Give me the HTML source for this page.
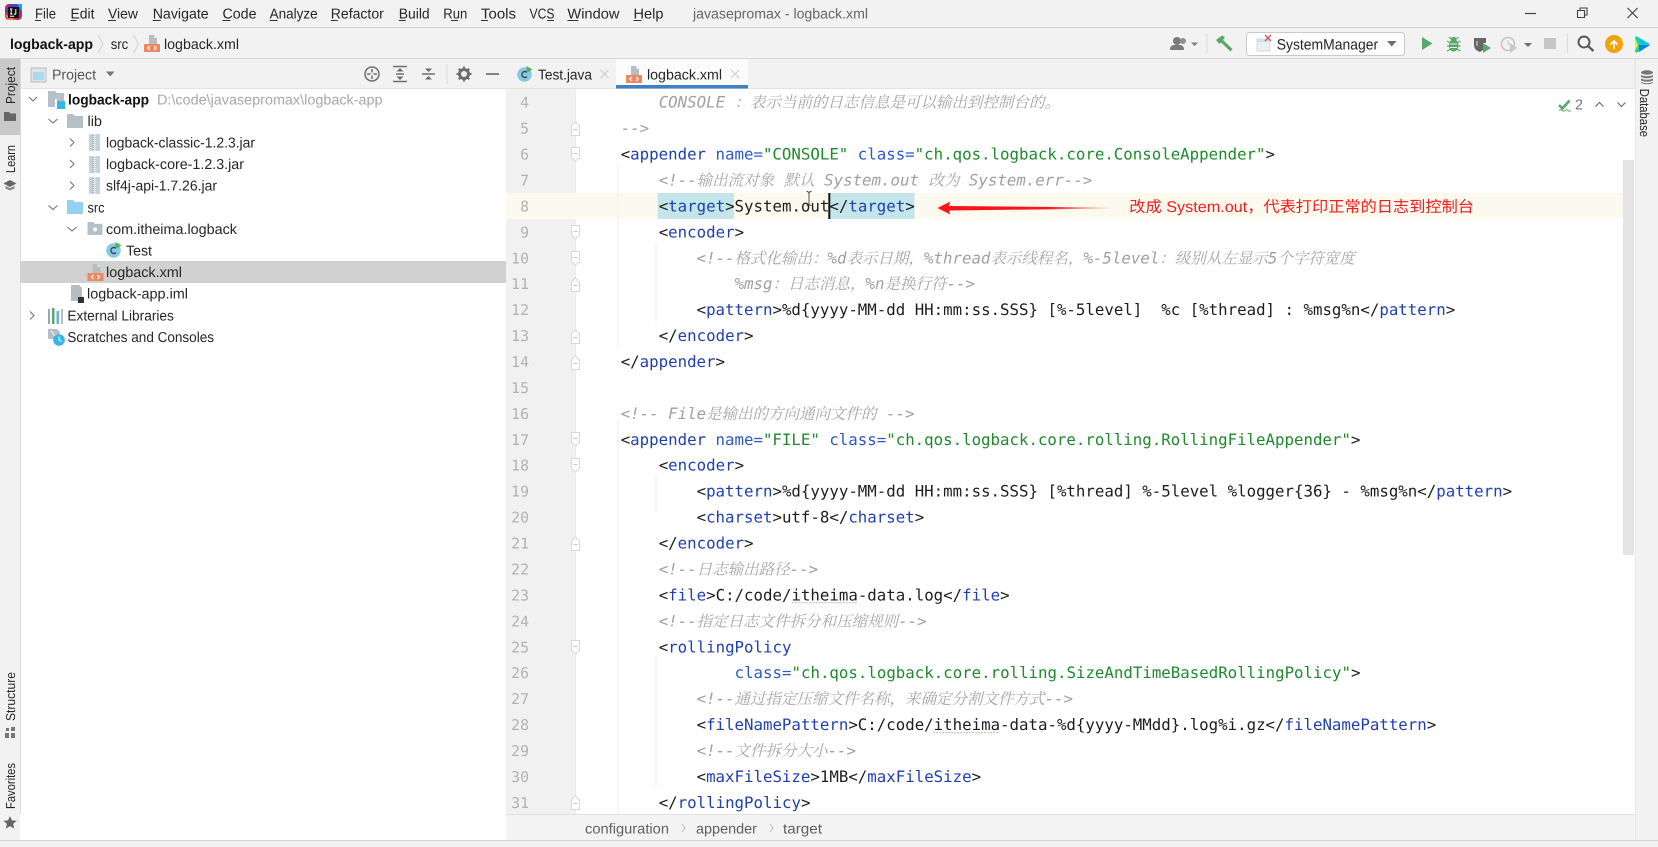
<!DOCTYPE html>
<html lang="en"><head><meta charset="utf-8"><title>logback.xml</title>
<style>
html,body{margin:0;padding:0;width:1658px;height:847px;overflow:hidden;background:#fff}
svg{display:block;text-rendering:geometricPrecision;filter:blur(.35px)}
text{white-space:pre}
.u{font-family:"Liberation Sans","Noto Sans CJK SC",sans-serif;font-size:14.4px;fill:#262626}
.b{font-weight:bold;fill:#111}
.code text{font-family:"DejaVu Sans Mono","Liberation Mono",monospace;font-size:15.76px;fill:#1d1d1d}
.k{fill:#1f3fb0}.a{fill:#2b57c9}.s{fill:#1f8a2c}
.code .m,.m{fill:#a0a0a0;font-style:italic}
.code .z{font-family:"Noto Serif CJK SC","Noto Sans CJK SC",serif;font-size:15.5px;fill:#a6a6a6;font-style:italic}
.ln text{font-family:"DejaVu Sans Mono","Liberation Mono",monospace;font-size:14.8px;fill:#b2b2b2;text-anchor:end}
</style></head><body>
<svg xmlns="http://www.w3.org/2000/svg" width="1658" height="847" viewBox="0 0 1658 847">
<defs>
<linearGradient id="ag" x1="0" x2="1" y1="0" y2="0"><stop offset="0" stop-color="#f8141a"/><stop offset=".6" stop-color="#f8141a"/><stop offset="1" stop-color="#f8141a" stop-opacity="0"/></linearGradient>
<symbol id="xml" viewBox="0 0 16 17"><path d="M5 0h5l3 3v7H5z" fill="#b9bdc0"/><path d="M10 0v3h3z" fill="#e4e6e8"/><rect y="9" width="16" height="8" fill="#ea8a62"/><path d="M6 11l-2.2 2 2.2 2M10 11l2.2 2-2.2 2" fill="none" stroke="#fff" stroke-width="1.1"/></symbol>
<symbol id="jar" viewBox="0 0 11 17"><rect width="11" height="17" fill="#c7d3da"/><rect x="4" width="3" height="17" fill="#e3eaee"/><path d="M4.2 1v15" stroke="#8fa2ad" stroke-width="1.4" stroke-dasharray="1 1"/><path d="M6.8 1v15" stroke="#a8d3e6" stroke-width="1.4" stroke-dasharray="1 1"/></symbol>
<symbol id="cls" viewBox="0 0 16 16"><circle cx="7.5" cy="8.5" r="7.3" fill="#8ac9e6"/><path d="M10 6.4A3 3 0 1 0 10 10.6" fill="none" stroke="#3b4a52" stroke-width="1.4"/><path d="M9.5 0l6 3.5-6 3.5z" fill="#4fb35c"/></symbol>
<symbol id="folder" viewBox="0 0 16 14"><path d="M0 0h6l2 2h8v12H0z"/></symbol>
<symbol id="up" viewBox="0 0 9 15"><path d="M.5 14.5V5L4.5 .8 8.5 5v9.5z" fill="#fff" stroke="#d8d8d8"/><path d="M2.5 8.5h4" stroke="#c6c6c6"/></symbol>
<symbol id="dn" viewBox="0 0 9 15"><path d="M.5 .5V10l4 4.2 4-4.2V.5z" fill="#fff" stroke="#d8d8d8"/><path d="M2.5 6.5h4" stroke="#c6c6c6"/></symbol>
</defs>

<!-- base -->
<rect width="1658" height="847" fill="#f2f2f2"/>
<rect y="27" width="1658" height="1" fill="#d4d4d4"/>
<rect y="58" width="1658" height="1" fill="#d6d6d6"/>
<rect x="20" y="89" width="486" height="725" fill="#fff"/>
<rect x="20" y="88" width="486" height="1" fill="#e2e2e2"/>
<rect x="506" y="88" width="1129" height="1" fill="#e2e2e2"/>
<rect x="20" y="59" width="1" height="781" fill="#dcdcdc"/>
<rect x="1634.5" y="59" width="1" height="781" fill="#dcdcdc"/>
<rect x="20" y="814" width="486" height="26" fill="#fff"/>
<rect y="840" width="1658" height="1" fill="#d4d4d4"/>

<!-- title bar -->
<rect x="5" y="4" width="17" height="16" rx="4" fill="#c9266c"/>
<path d="M5 12l5-8h7l5 3v6z" fill="#4a3fcf"/>
<path d="M17 4h5v8z" fill="#1aa0e8"/><path d="M5 14l3 6h8z" fill="#f0862a"/>
<rect x="8" y="7" width="11" height="11" fill="#111"/>
<path d="M10 9h2.4M11.2 9v5M10 14h2.4M15.8 9v4.5q0 .8-1 .8h-1M9.8 16.2h4.4" stroke="#fff" stroke-width="1" fill="none"/>
<g class="mn">
<text class="u" x="35" y="18.5" textLength="21" lengthAdjust="spacingAndGlyphs">File</text>
<text class="u" x="70.5" y="18.5" textLength="24" lengthAdjust="spacingAndGlyphs">Edit</text>
<text class="u" x="108" y="18.5" textLength="30" lengthAdjust="spacingAndGlyphs">View</text>
<text class="u" x="152.7" y="18.5" textLength="56" lengthAdjust="spacingAndGlyphs">Navigate</text>
<text class="u" x="222.5" y="18.5" textLength="34" lengthAdjust="spacingAndGlyphs">Code</text>
<text class="u" x="269.6" y="18.5" textLength="48" lengthAdjust="spacingAndGlyphs">Analyze</text>
<text class="u" x="330.8" y="18.5" textLength="53" lengthAdjust="spacingAndGlyphs">Refactor</text>
<text class="u" x="398.7" y="18.5" textLength="31" lengthAdjust="spacingAndGlyphs">Build</text>
<text class="u" x="443.3" y="18.5" textLength="24" lengthAdjust="spacingAndGlyphs">Run</text>
<text class="u" x="481" y="18.5" textLength="35" lengthAdjust="spacingAndGlyphs">Tools</text>
<text class="u" x="529.5" y="18.5" textLength="25" lengthAdjust="spacingAndGlyphs">VCS</text>
<text class="u" x="567.4" y="18.5" textLength="52" lengthAdjust="spacingAndGlyphs">Window</text>
<text class="u" x="633.5" y="18.5" textLength="30" lengthAdjust="spacingAndGlyphs">Help</text>
</g>
<g stroke="#333" stroke-width="1"><path d="M35 20.5h6M70.5 20.5h6M108 20.5h8M152.7 20.5h8M222.5 20.5h8M269.6 20.5h8M330.8 20.5h7M398.7 20.5h7M451 20.5h7M481 20.5h7M547 20.5h7M567.4 20.5h11M633.5 20.5h8"/></g>
<text class="u" x="693" y="18.5" textLength="175" lengthAdjust="spacingAndGlyphs" style="fill:#666">javasepromax - logback.xml</text>
<path d="M1525 13.5h11" stroke="#444" stroke-width="1.2"/>
<path d="M1577.5 10.5h7v7h-7zM1580 10.5V8h7v7h-2.5" fill="none" stroke="#444" stroke-width="1.1"/>
<path d="M1627.5 8l10 10M1637.5 8l-10 10" stroke="#444" stroke-width="1.2"/>

<!-- nav bar -->
<text class="u b" x="10" y="49" textLength="83" lengthAdjust="spacingAndGlyphs">logback-app</text>
<path d="M98 35l5 9-5 9M133.5 35l5 9-5 9" fill="none" stroke="#d2d2d2"/>
<text class="u" x="110.7" y="49" textLength="17.5" lengthAdjust="spacingAndGlyphs">src</text>
<use href="#xml" x="144" y="35" width="16" height="17"/>
<text class="u" x="164" y="49" textLength="75" lengthAdjust="spacingAndGlyphs">logback.xml</text>

<!-- toolbar -->
<circle cx="1177" cy="41" r="4" fill="#7a7a7a"/><path d="M1170 50q0-5 4-5h6q4 0 4 5z" fill="#7a7a7a"/><circle cx="1183" cy="41" r="3" fill="#8f8f8f"/>
<path d="M1191 42.5h7l-3.5 3.5z" fill="#7a7a7a"/>
<rect x="1206.5" y="33" width="1" height="20" fill="#dcdcdc"/>
<path d="M1216 40l6-4.500 3 1.500-2 3 9.500 9-2 2.500-9.500-9-1.500 1.500z" fill="#59a869"/>
<rect x="1246.500" y="32.500" width="158" height="23" rx="3" fill="#fff" stroke="#c9c9c9"/>
<rect x="1257" y="39" width="13" height="12" fill="#eaf1f5" stroke="#cfdbe2"/><rect x="1257" y="39" width="13" height="3" fill="#cfe2ec"/>
<path d="M1265 35l6 6M1271 35l-6 6" stroke="#d8525f" stroke-width="1.400"/>
<text class="u" x="1276.700" y="49.500" textLength="101.500" lengthAdjust="spacingAndGlyphs" style="font-size:15px">SystemManager</text>
<path d="M1387 41h9.500l-4.700 5.500z" fill="#6e6e6e"/>
<path d="M1422 37l10.500 6.500-10.500 6.500z" fill="#59a869"/>
<ellipse cx="1453.700" cy="45.500" rx="4.800" ry="6" fill="#59a869"/><circle cx="1453.700" cy="39.500" r="2.800" fill="#59a869"/>
<path d="M1447 41l4 2M1460.500 41l-4 2M1447 46h13.500M1447 51l4-2M1460.500 51l-4-2M1449 37l2 2M1458.500 37l-2 2" stroke="#59a869" stroke-width="1.200"/><path d="M1450 44h7M1450 47.500h7" stroke="#eaf3ec" stroke-width="1"/>
<path d="M1474 38h12v5h-3v7l-3 2q-6-2-6-7z" fill="#666"/><path d="M1477 41v5" stroke="#ddd"/><path d="M1483 43l8 5-8 5z" fill="#59a869"/>
<circle cx="1508" cy="44" r="6.500" fill="none" stroke="#c4c4c4" stroke-width="1.600"/><path d="M1508 40v4h3" stroke="#c4c4c4" fill="none"/><path d="M1510 43l7 5-7 5z" fill="#c8c8c8"/>
<path d="M1524 43h8l-4 4z" fill="#6e6e6e"/>
<rect x="1544" y="38" width="12" height="11" fill="#c6c6c6"/>
<rect x="1567" y="33" width="1" height="20" fill="#dcdcdc"/>
<circle cx="1584" cy="42" r="5.500" fill="none" stroke="#555" stroke-width="1.900"/><path d="M1588 46l5.500 5" stroke="#555" stroke-width="2.200"/>
<circle cx="1614" cy="44" r="9" fill="#f0a30a"/><path d="M1614 49v-8M1610.500 44.500l3.500-3.500 3.500 3.500" fill="none" stroke="#fff" stroke-width="1.600"/>
<path d="M1635 38q0-2 2-1.500l12 7q1.500 1 0 2l-12 7q-2 .5-2-1.500z" fill="#21d789"/><path d="M1636 36.500l13 7-7 1z" fill="#07c3f2"/><path d="M1639 45l11 0-11 7z" fill="#087cfa"/><path d="M1635 38v13l3-6z" fill="#e8e84a"/>

<!-- left stripe -->
<rect x="0" y="59" width="20" height="76" fill="#c9c9c9"/>
<text class="u" transform="translate(15,104) rotate(-90)" textLength="37" lengthAdjust="spacingAndGlyphs" style="font-size:13px">Project</text>
<path d="M4 112h5l1.500 1.500H16V121H4z" fill="#666"/>
<text class="u" transform="translate(15,173) rotate(-90)" textLength="28" lengthAdjust="spacingAndGlyphs" style="font-size:13px">Learn</text>
<path d="M10 180l6.500 3.500-6.500 3.500-6.500-3.500z" fill="#666"/><path d="M5.500 186v2.500l4.500 2 4.500-2V186l-4.500 2z" fill="#888"/>
<text class="u" transform="translate(15,721) rotate(-90)" textLength="49" lengthAdjust="spacingAndGlyphs" style="font-size:13px">Structure</text>
<path d="M5 733h4v5H5zM11 733h4v5h-4zM6 728h3v3H6zM11 727h4v4h-4z" fill="#777"/>
<text class="u" transform="translate(15,809) rotate(-90)" textLength="46" lengthAdjust="spacingAndGlyphs" style="font-size:13px">Favorites</text>
<path d="M10 816l1.900 4.400 4.800.4-3.600 3.100 1.100 4.700-4.200-2.500-4.200 2.500 1.100-4.700-3.600-3.100 4.800-.4z" fill="#666"/>

<!-- project header -->
<rect x="31" y="68" width="15" height="14" fill="#dfe3e5" stroke="#b9c0c4"/><rect x="33" y="72" width="11" height="8" fill="#a9dbee"/>
<text class="u" x="52" y="79.500" textLength="44" lengthAdjust="spacingAndGlyphs" style="fill:#555">Project</text>
<path d="M106 71.500h8.500l-4.200 5z" fill="#777"/>
<circle cx="372" cy="74" r="7" fill="none" stroke="#6e6e6e" stroke-width="1.500"/><path d="M372 69v3.500M372 75.500v3.500M367 74h3.500M373.500 74h3.500" stroke="#6e6e6e" stroke-width="1.500"/>
<path d="M393 66.500h14M393 81.500h14M396 74h8" stroke="#6e6e6e" stroke-width="1.500"/><path d="M400 68l-3.500 3.500h7zM400 80l-3.500-3.500h7z" fill="#6e6e6e"/>
<path d="M422 74h13" stroke="#6e6e6e" stroke-width="1.500"/><path d="M428.500 72l-3.500-3.500h7zM428.500 76l-3.500 3.500h7z" fill="#6e6e6e"/>
<rect x="446.500" y="64" width="1" height="20" fill="#dcdcdc"/>
<circle cx="464" cy="74" r="4.500" fill="none" stroke="#6e6e6e" stroke-width="3"/><path d="M464 66.500v3M464 78.500v3M456.500 74h3M468.500 74h3M458.700 68.700l2 2M467.300 77.300l2 2M469.300 68.700l-2 2M460.700 77.300l-2 2" stroke="#6e6e6e" stroke-width="2"/>
<path d="M486 74h13" stroke="#6e6e6e" stroke-width="1.700"/>

<!-- tree -->
<rect x="20" y="261" width="486" height="22" fill="#d1d1d1"/>
<g fill="none" stroke="#777" stroke-width="1.100">
<path d="M29 97l4 4 4-4M48.500 119l4.500 4 4.500-4M48.500 205.500l4.500 4 4.500-4M67.500 227l4.500 4 4.500-4"/>
<path d="M70 138.500l4 4-4 4M70 160l4 4-4 4M70 181.500l4 4-4 4M30 311.500l4 4-4 4"/>
</g>
<path d="M48 91h7l2 2h7v14H48z" fill="#b5bfc6"/><rect x="57" y="101" width="8" height="8" fill="#35b5e8"/><rect x="55" y="99" width="2" height="10" fill="#fff"/>
<text class="u b" x="68" y="104.300" textLength="81" lengthAdjust="spacingAndGlyphs">logback-app</text>
<text class="u" x="157" y="104.300" textLength="225.500" lengthAdjust="spacingAndGlyphs" style="fill:#a8a8a8">D:\code\javasepromax\logback-app</text>
<use href="#folder" x="67" y="114" width="16" height="14" fill="#b5bfc6"/>
<text class="u" x="87.500" y="126" textLength="14.500" lengthAdjust="spacingAndGlyphs">lib</text>
<use href="#jar" x="89" y="134" width="11" height="17"/>
<text class="u" x="106" y="147.500" textLength="149" lengthAdjust="spacingAndGlyphs">logback-classic-1.2.3.jar</text>
<use href="#jar" x="89" y="156" width="11" height="17"/>
<text class="u" x="106" y="169" textLength="138" lengthAdjust="spacingAndGlyphs">logback-core-1.2.3.jar</text>
<use href="#jar" x="89" y="177" width="11" height="17"/>
<text class="u" x="106" y="190.700" textLength="111" lengthAdjust="spacingAndGlyphs">slf4j-api-1.7.26.jar</text>
<use href="#folder" x="67" y="200" width="16" height="14" fill="#93d1ee"/>
<text class="u" x="87.500" y="212.300" textLength="17" lengthAdjust="spacingAndGlyphs">src</text>
<use href="#folder" x="87.500" y="222" width="15" height="13" fill="#b5bfc6"/><circle cx="95" cy="229.500" r="2" fill="#fff"/>
<text class="u" x="106" y="233.900" textLength="131" lengthAdjust="spacingAndGlyphs">com.itheima.logback</text>
<use href="#cls" x="106" y="242" width="16" height="16"/>
<text class="u" x="126" y="255.500" textLength="26" lengthAdjust="spacingAndGlyphs">Test</text>
<use href="#xml" x="87.500" y="264" width="16" height="17"/>
<text class="u" x="106" y="277.100" textLength="76" lengthAdjust="spacingAndGlyphs">logback.xml</text>
<path d="M71 285h8l3 3v13H71z" fill="#b5bdc2"/><rect x="78" y="297" width="6" height="6" fill="#333"/>
<text class="u" x="87" y="298.700" textLength="101" lengthAdjust="spacingAndGlyphs">logback-app.iml</text>
<path d="M48 309h2v15h-2z" fill="#9aa7b0"/><path d="M52 308h2.500v16H52z" fill="#5fa868"/><path d="M56.500 311h2.500v13h-2.500z" fill="#62b3e0"/><path d="M61 309h2v15h-2z" fill="#b5bfc6"/>
<text class="u" x="67.400" y="320.300" textLength="106.500" lengthAdjust="spacingAndGlyphs">External Libraries</text>
<path d="M48 329h9l3 3v7H48z" fill="#b5bfc6"/><path d="M51 331l4 5" stroke="#fff"/><circle cx="59" cy="340" r="5.800" fill="#35b5e8"/><path d="M59 336.500v3.500l2.500 1.500" stroke="#fff" fill="none"/>
<text class="u" x="67.400" y="341.900" textLength="146.600" lengthAdjust="spacingAndGlyphs">Scratches and Consoles</text>

<!-- tabs -->
<use href="#cls" x="517" y="66" width="16" height="16"/>
<text class="u" x="538" y="79.500" textLength="54" lengthAdjust="spacingAndGlyphs">Test.java</text>
<path d="M600.500 70l8 8M608.500 70l-8 8" stroke="#cfcfcf" stroke-width="1.200"/>
<rect x="616" y="59" width="132" height="26" fill="#fbfbfb"/>
<rect x="616" y="85" width="132" height="3.500" fill="#3f7fc4"/>
<use href="#xml" x="626" y="66" width="16" height="17"/>
<text class="u" x="647" y="79.500" textLength="75" lengthAdjust="spacingAndGlyphs">logback.xml</text>
<path d="M731 70l8 8M739 70l-8 8" stroke="#cfcfcf" stroke-width="1.200"/>

<!-- editor -->
<rect x="506" y="89" width="1129" height="725" fill="#fff"/>
<rect x="506" y="89" width="69" height="725" fill="#f1f1f1"/>
<rect x="575" y="89" width="1" height="725" fill="#ececec"/>
<rect x="506" y="193" width="1117" height="26" fill="#fcfaee"/>
<rect x="1623" y="160" width="11" height="395" fill="#e4e4e4"/>
<path d="M618 165v182M618 420v394M656 243v79M656 475v38M656 655v133" stroke="#eeeeee" fill="none"/>
<rect x="657.700" y="193" width="76.300" height="26" fill="#c4e6ea"/>
<rect x="829" y="193" width="85.500" height="26" fill="#c4e6ea"/>

<!-- fold marks -->
<use href="#up" x="571" y="121" width="9" height="15"/>
<use href="#dn" x="571" y="147" width="9" height="15"/>
<use href="#dn" x="571" y="225" width="9" height="15"/>
<use href="#dn" x="571" y="251" width="9" height="15"/>
<use href="#up" x="571" y="277" width="9" height="15"/>
<use href="#up" x="571" y="329" width="9" height="15"/>
<use href="#up" x="571" y="355" width="9" height="15"/>
<use href="#dn" x="571" y="432" width="9" height="15"/>
<use href="#dn" x="571" y="458" width="9" height="15"/>
<use href="#up" x="571" y="536" width="9" height="15"/>
<use href="#dn" x="571" y="640" width="9" height="15"/>
<use href="#up" x="571" y="795" width="9" height="15"/>

<!-- line numbers -->
<g class="ln">
<text x="529" y="107.700">4</text><text x="529" y="133.600">5</text><text x="529" y="159.600">6</text><text x="529" y="185.500">7</text>
<text x="529" y="211.400">8</text><text x="529" y="237.400">9</text><text x="529" y="263.300">10</text><text x="529" y="289.200">11</text>
<text x="529" y="315.100">12</text><text x="529" y="341.100">13</text><text x="529" y="367">14</text><text x="529" y="392.900">15</text>
<text x="529" y="418.900">16</text><text x="529" y="444.800">17</text><text x="529" y="470.700">18</text><text x="529" y="496.700">19</text>
<text x="529" y="522.600">20</text><text x="529" y="548.500">21</text><text x="529" y="574.500">22</text><text x="529" y="600.400">23</text>
<text x="529" y="626.300">24</text><text x="529" y="652.300">25</text><text x="529" y="678.200">26</text><text x="529" y="704.100">27</text>
<text x="529" y="730.100">28</text><text x="529" y="756">29</text><text x="529" y="781.900">30</text><text x="529" y="807.900">31</text>
</g>

<!-- code -->
<g class="code">
<text x="658.700" y="107.700" class="m">CONSOLE <tspan class="z">：表示当前的日志信息是可以输出到控制台的。</tspan></text>
<text x="620.700" y="133.600" class="m">--&gt;</text>
<text x="620.700" y="159.600">&lt;<tspan class="k">appender</tspan> <tspan class="a">name=</tspan><tspan class="s">"CONSOLE"</tspan> <tspan class="a">class=</tspan><tspan class="s">"ch.qos.logback.core.ConsoleAppender"</tspan>&gt;</text>
<text x="658.700" y="185.500" class="m">&lt;!--<tspan class="z">输出流对象</tspan> <tspan class="z">默认</tspan> System.out <tspan class="z">改为</tspan> System.err--&gt;</text>
<text x="658.700" y="211.400">&lt;<tspan class="k">target</tspan>&gt;System.out&lt;/<tspan class="k">target</tspan>&gt;</text>
<text x="658.700" y="237.400">&lt;<tspan class="k">encoder</tspan>&gt;</text>
<text x="696.600" y="263.300" class="m">&lt;!--<tspan class="z">格式化输出：</tspan>%d<tspan class="z">表示日期，</tspan>%thread<tspan class="z">表示线程名，</tspan>%-5level<tspan class="z">：级别从左显示</tspan>5<tspan class="z">个字符宽度</tspan></text>
<text x="734.600" y="289.200" class="m">%msg<tspan class="z">：日志消息，</tspan>%n<tspan class="z">是换行符</tspan>--&gt;</text>
<text x="696.600" y="315.100">&lt;<tspan class="k">pattern</tspan>&gt;%d{yyyy-MM-dd HH:mm:ss.SSS} [%-5level]  %c [%thread] : %msg%n&lt;/<tspan class="k">pattern</tspan>&gt;</text>
<text x="658.700" y="341.100">&lt;/<tspan class="k">encoder</tspan>&gt;</text>
<text x="620.700" y="367">&lt;/<tspan class="k">appender</tspan>&gt;</text>
<text x="620.700" y="418.900" class="m">&lt;!-- File<tspan class="z">是输出的方向通向文件的</tspan> --&gt;</text>
<text x="620.700" y="444.800">&lt;<tspan class="k">appender</tspan> <tspan class="a">name=</tspan><tspan class="s">"FILE"</tspan> <tspan class="a">class=</tspan><tspan class="s">"ch.qos.logback.core.rolling.RollingFileAppender"</tspan>&gt;</text>
<text x="658.700" y="470.700">&lt;<tspan class="k">encoder</tspan>&gt;</text>
<text x="696.600" y="496.700">&lt;<tspan class="k">pattern</tspan>&gt;%d{yyyy-MM-dd HH:mm:ss.SSS} [%thread] %-5level %logger{36} - %msg%n&lt;/<tspan class="k">pattern</tspan>&gt;</text>
<text x="696.600" y="522.600">&lt;<tspan class="k">charset</tspan>&gt;utf-8&lt;/<tspan class="k">charset</tspan>&gt;</text>
<text x="658.700" y="548.500">&lt;/<tspan class="k">encoder</tspan>&gt;</text>
<text x="658.700" y="574.500" class="m">&lt;!--<tspan class="z">日志输出路径</tspan>--&gt;</text>
<text x="658.700" y="600.400">&lt;<tspan class="k">file</tspan>&gt;C:/code/itheima-data.log&lt;/<tspan class="k">file</tspan>&gt;</text>
<text x="658.700" y="626.300" class="m">&lt;!--<tspan class="z">指定日志文件拆分和压缩规则</tspan>--&gt;</text>
<text x="658.700" y="652.300">&lt;<tspan class="k">rollingPolicy</tspan></text>
<text x="734.600" y="678.200"><tspan class="a">class=</tspan><tspan class="s">"ch.qos.logback.core.rolling.SizeAndTimeBasedRollingPolicy"</tspan>&gt;</text>
<text x="696.600" y="704.100" class="m">&lt;!--<tspan class="z">通过指定压缩文件名称，来确定分割文件方式</tspan>--&gt;</text>
<text x="696.600" y="730.100">&lt;<tspan class="k">fileNamePattern</tspan>&gt;C:/code/itheima-data-%d{yyyy-MMdd}.log%i.gz&lt;/<tspan class="k">fileNamePattern</tspan>&gt;</text>
<text x="696.600" y="756" class="m">&lt;!--<tspan class="z">文件拆分大小</tspan>--&gt;</text>
<text x="696.600" y="781.900">&lt;<tspan class="k">maxFileSize</tspan>&gt;1MB&lt;/<tspan class="k">maxFileSize</tspan>&gt;</text>
<text x="658.700" y="807.900">&lt;/<tspan class="k">rollingPolicy</tspan>&gt;</text>
</g>
<path d="M791.700 602.800h65M933 732.800h66" stroke="#a9c9a0" stroke-dasharray="2 1" fill="none"/>
<rect x="828.300" y="193" width="2" height="26" fill="#111"/>
<path d="M806.500 191.500q2.500 0 2.500 2v10q0 2-2.500 2M811.500 191.500q-2.500 0-2.500 2v10q0 2 2.500 2" fill="none" stroke="#444" stroke-width=".9"/>

<!-- annotation -->
<path d="M948 206L1113 207.500V208.500L948 210.500z" fill="url(#ag)"/>
<path d="M937.400 208l13-6.500-2.500 6.500 2.500 6.500z" fill="#f8141a"/>
<text x="1129.300" y="212" textLength="344.700" lengthAdjust="spacingAndGlyphs" style="font-family:'Liberation Sans','Noto Sans CJK SC',sans-serif;font-size:15.600px;fill:#f51c1c">改成 System.out，代表打印正常的日志到控制台</text>

<!-- inspection widget -->
<path d="M1559 105l3.500 3.500 7-8" fill="none" stroke="#59a869" stroke-width="2.600"/><path d="M1559 110.500q1.500-1.500 3 0t3 0 3 0 3 0" fill="none" stroke="#59a869" stroke-width=".9"/>
<text class="u" x="1575" y="109.500" textLength="8" lengthAdjust="spacingAndGlyphs" style="fill:#777">2</text>
<path d="M1595.500 106.500l4-4 4 4M1617.500 102.500l4 4 4-4" fill="none" stroke="#6e6e6e" stroke-width="1.200"/>

<!-- right stripe -->
<g fill="#777"><ellipse cx="1647" cy="72.500" rx="6" ry="2.200"/><path d="M1641 75q6 2.500 12 0v2q-6 2.500-12 0zM1641 78.500q6 2.500 12 0v2q-6 2.500-12 0zM1641 82q6 2.500 12 0v1q-6 2.500-12 0z"/></g>
<text class="u" transform="translate(1640,88.700) rotate(90)" textLength="48.300" lengthAdjust="spacingAndGlyphs" style="font-size:13px">Database</text>

<!-- bottom breadcrumb -->
<rect x="506" y="814" width="1129" height="26" fill="#f4f4f4"/>
<rect x="506" y="814" width="1129" height="1" fill="#e2e2e2"/>
<text class="u" x="585" y="833.500" textLength="84" lengthAdjust="spacingAndGlyphs" style="fill:#606060">configuration</text>
<text class="u" x="696" y="833.500" textLength="61" lengthAdjust="spacingAndGlyphs" style="fill:#606060">appender</text>
<text class="u" x="783" y="833.500" textLength="39" lengthAdjust="spacingAndGlyphs" style="fill:#606060">target</text>
<path d="M682 824l3 4-3 4M770 824l3 4-3 4" fill="none" stroke="#bcbcbc"/>
</svg>
</body></html>
